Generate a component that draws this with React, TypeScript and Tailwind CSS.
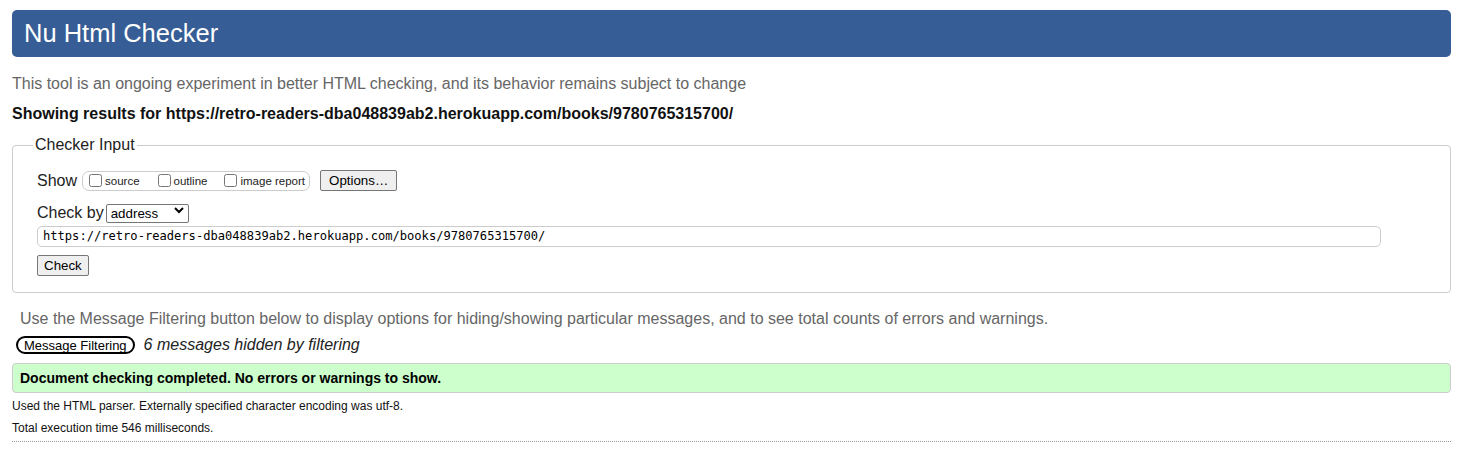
export default function App() {
  return (
    <div className="w-[1477px] h-[463px] bg-white font-['Liberation_Sans',Arial,sans-serif] text-black overflow-hidden">
      <div className="ml-3 w-[1439px] pt-[10px]">
        <h1 className="h-[47px] rounded-[5px] bg-[#365d95] pl-3 flex items-center text-[25.5px] text-white leading-none">
          Nu Html Checker
        </h1>

        <p className="mt-[18px] text-[16px] leading-[18px] text-[#666]">
          This tool is an ongoing experiment in better HTML checking, and its behavior remains subject to change
        </p>
        <p className="mt-[12px] text-[16px] leading-[18px] font-bold text-[#111]">
          Showing results for https://retro-readers-dba048839ab2.herokuapp.com/books/9780765315700/
        </p>

        <fieldset className="mt-[13px] border border-[#ccc] rounded-[4px] pl-6 pr-6 pt-[16px] pb-[16px]">
          <legend className="-ml-1 px-0.5 text-[16px] leading-[18px] text-[#222]">Checker Input</legend>

          <div className="flex items-center h-[21px]">
            <span className="text-[16px] text-[#222]">Show</span>
            <div className="ml-[5px] flex items-center h-[20px] border border-[#ccc] rounded-[7px] pl-[6px] pr-[4px] text-[11.5px] text-[#222]">
              <label className="flex items-center">
                <input type="checkbox" className="w-[13px] h-[13px] m-0" />
                <span className="ml-[3px] mt-[3px]">source</span>
              </label>
              <label className="flex items-center ml-[18px]">
                <input type="checkbox" className="w-[13px] h-[13px] m-0" />
                <span className="ml-[3px] mt-[3px]">outline</span>
              </label>
              <label className="flex items-center ml-[17px]">
                <input type="checkbox" className="w-[13px] h-[13px] m-0" />
                <span className="ml-[3px] mt-[3px]">image report</span>
              </label>
            </div>
            <button className="ml-[10px] h-[21px] px-[8px] border border-[#767676] rounded-[2px] bg-[#efefef] text-[13.33px] leading-none text-black">
              Options…
            </button>
          </div>

          <div className="mt-[12px] flex items-center h-[20px]">
            <span className="text-[16px] text-[#222]">Check by</span>
            <div className="relative ml-[2px]">
              <select className="appearance-none h-[19px] w-[83px] border border-[#767676] rounded-[2px] bg-white pl-[4px] text-[13.33px] leading-none text-black">
                <option>address</option>
              </select>
              <svg className="absolute right-[5px] top-[6px] pointer-events-none" width="10" height="7" viewBox="0 0 10 7">
                <path d="M1 1 L5 5 L9 1" fill="none" stroke="#000" strokeWidth="2" />
              </svg>
            </div>
          </div>

          <div className="mt-[3px] h-[21px] w-[1344px] border border-[#ccc] rounded-[5px] flex items-center pl-[5px] font-['DejaVu_Sans_Mono',monospace] text-[12.1px] text-black">
            https://retro-readers-dba048839ab2.herokuapp.com/books/9780765315700/
          </div>

          <button className="mt-[8px] h-[21px] px-[6px] border border-[#767676] rounded-[2px] bg-[#efefef] text-[13.33px] leading-none text-black block">
            Check
          </button>
        </fieldset>

        <p className="mt-[17px] ml-2 text-[16px] leading-[18px] text-[#666]">
          Use the Message Filtering button below to display options for hiding/showing particular messages, and to see total counts of errors and warnings.
        </p>

        <div className="mt-[8px] flex items-center h-[18px] ml-1">
          <button className="h-[18px] px-[6px] border-2 border-black rounded-full bg-white text-[13px] leading-none text-black">
            Message Filtering
          </button>
          <span className="ml-[9px] italic text-[16px] text-[#222]">6 messages hidden by filtering</span>
        </div>

        <div className="mt-[9px] h-[30px] border border-[#ccc] rounded-[4px] bg-[#ccffcc] flex items-center pl-[7px] text-[14px] font-bold text-black">
          Document checking completed. No errors or warnings to show.
        </div>

        <p className="mt-[6px] text-[12px] leading-[14px] text-[#111]">
          Used the HTML parser. Externally specified character encoding was utf-8.
        </p>
        <p className="mt-[8px] text-[12px] leading-[14px] text-[#111]">
          Total execution time 546 milliseconds.
        </p>
        <hr className="mt-[6px] border-0 border-t border-dotted border-[#999]" />
      </div>
    </div>
  );
}
